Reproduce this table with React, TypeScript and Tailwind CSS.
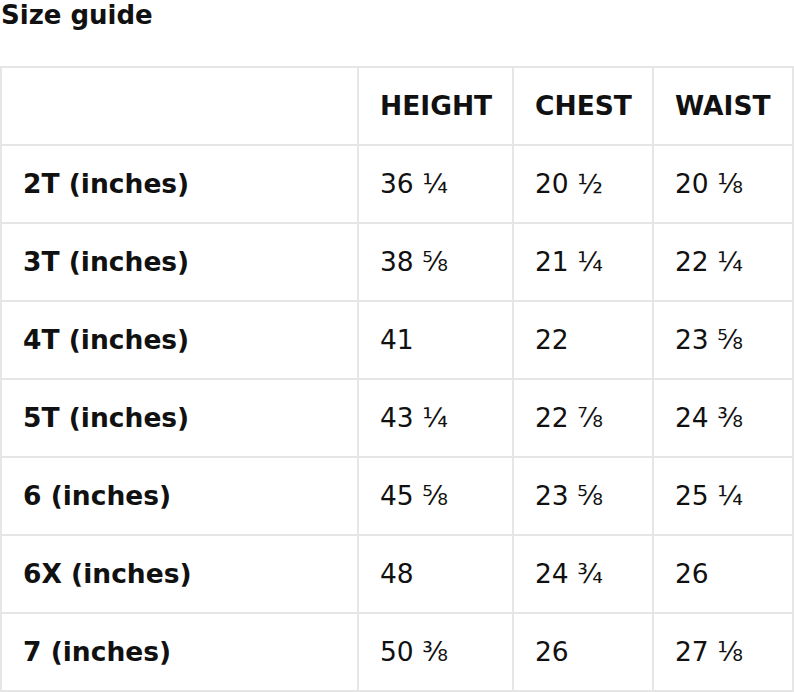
import React from 'react';

// Size chart rows: label, then height / chest / waist in inches
const ROWS: [string, string, string, string][] = [
  ['2T (inches)', '36 ¼', '20 ½', '20 ⅛'],
  ['3T (inches)', '38 ⅝', '21 ¼', '22 ¼'],
  ['4T (inches)', '41', '22', '23 ⅝'],
  ['5T (inches)', '43 ¼', '22 ⅞', '24 ⅜'],
  ['6 (inches)', '45 ⅝', '23 ⅝', '25 ¼'],
  ['6X (inches)', '48', '24 ¾', '26'],
  ['7 (inches)', '50 ⅜', '26', '27 ⅛'],
];

const HEADERS = ['', 'HEIGHT', 'CHEST', 'WAIST'];

const cell = 'h-[78px] flex items-center pl-[21px] border-r-2 border-b-2 border-[#e6e6e6]';

const App = () => {
  return (
    <div className="w-[794px] h-[692px] bg-white text-[#111] overflow-hidden font-['DejaVu_Sans',sans-serif]">
      <h1 className="text-[26px] leading-[30px] font-bold pl-[1px]">Size guide</h1>

      <div className="mt-[36px] grid grid-cols-[357px_155px_140px_140px] border-l-2 border-t-2 border-[#e6e6e6] text-[26.5px]">
        {/* Header row */}
        {HEADERS.map((h, i) => (
          <div key={i} className={`${cell} font-bold`}>
            {h}
          </div>
        ))}

        {/* Body rows */}
        {ROWS.map((row) =>
          row.map((value, i) => (
            <div key={row[0] + i} className={`${cell} ${i === 0 ? 'font-bold' : ''}`}>
              {value}
            </div>
          ))
        )}
      </div>
    </div>
  );
};

export default App;
